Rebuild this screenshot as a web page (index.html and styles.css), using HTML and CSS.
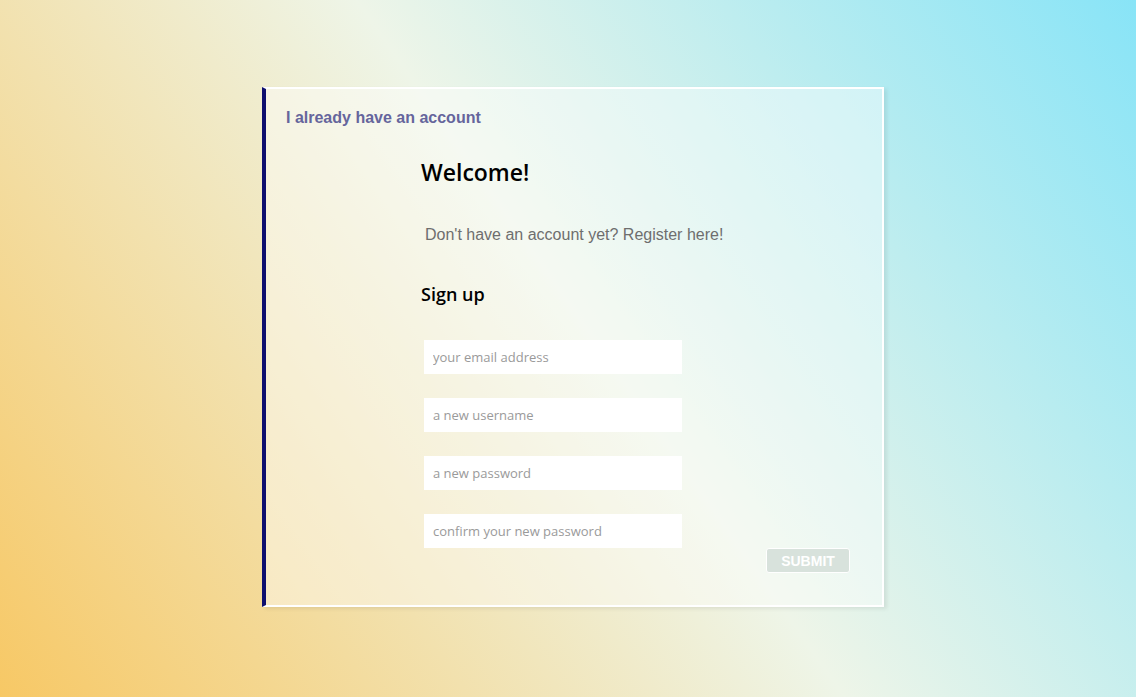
FILE: index.html
```html
<!DOCTYPE html>
<html>
<head>
<meta charset="utf-8">
<link rel="stylesheet" href="styles.css">
</head>
<body>
<div class="page">
  <div class="card">
    <a class="switch">I already have an account</a>
    <div class="panel">
      <h1 class="title">Welcome!</h1>
      <p class="lead">Don't have an account yet? Register here!</p>
      <h2 class="subtitle">Sign up</h2>
      <form class="form">
        <input class="field" type="text" placeholder="your email address">
        <input class="field" type="text" placeholder="a new username">
        <input class="field" type="password" placeholder="a new password">
        <input class="field" type="password" placeholder="confirm your new password">
        <div class="actions"><button class="submit" type="button">SUBMIT</button></div>
      </form>
    </div>
  </div>
</div>
</body>
</html>
```
FILE: styles.css
```css
html, body {
  margin: 0;
  height: 100%;
}
body {
  background: linear-gradient(55deg, #f7c865 0%, #eef5e8 52%, #88e4f7 100%);
  font-family: "Liberation Sans", Arial, sans-serif;
}
.page {
  display: flex;
  justify-content: center;
  padding: 87px 0 0 10px;
}
.card {
  box-sizing: border-box;
  width: 622px;
  height: 520px;
  border: 2px solid #ffffff;
  border-left: 4px solid #0f0f6e;
  background: rgba(255, 255, 255, 0.42);
  box-shadow: 3px 2px 4px rgba(0, 0, 0, 0.08);
  padding: 20px 0 0 20px;
}
.switch {
  display: block;
  font-weight: bold;
  font-size: 16px;
  color: #65659c;
  line-height: 18px;
}
.panel {
  margin-left: 135px;
}
.title {
  margin: 30px 0 0 0;
  font-family: "Open Sans", "DejaVu Sans", sans-serif;
  font-weight: 600;
  font-size: 23px;
  line-height: 30px;
  color: #000;
}
.lead {
  margin: 39px 0 0 4px;
  font-size: 16px;
  line-height: 18px;
  color: #6e6e6e;
}
.subtitle {
  margin: 38px 0 0 0;
  font-family: "Open Sans", "DejaVu Sans", sans-serif;
  font-weight: 600;
  font-size: 18px;
  line-height: 24px;
  color: #000;
}
.form {
  display: flex;
  flex-direction: column;
  align-items: flex-start;
  gap: 24px;
  margin: 34px 0 0 3px;
  position: relative;
}
.field {
  box-sizing: border-box;
  width: 258px;
  height: 34px;
  border: none;
  background: #fff;
  padding: 0 9px;
  font-family: "Open Sans", "DejaVu Sans", sans-serif;
  font-size: 13px;
  color: #333;
  outline: none;
}
.field::placeholder {
  color: #9a9a9a;
}
.actions {
  position: absolute;
  right: 32px;
  bottom: -25px;
}
.submit {
  box-sizing: border-box;
  width: 84px;
  height: 25px;
  border: 1px solid #ffffff;
  border-radius: 3px;
  background: #d8e2dc;
  color: #ffffff;
  font-family: "Liberation Sans", Arial, sans-serif;
  font-weight: bold;
  font-size: 14px;
  padding: 0;
}
```
